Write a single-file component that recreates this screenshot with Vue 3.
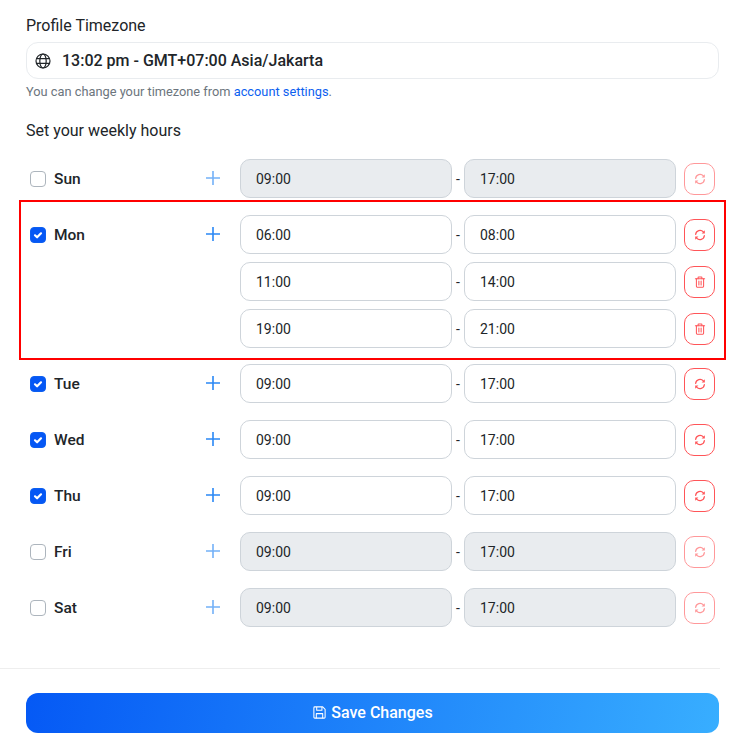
<script setup>
const days = [
  { name: "Sun", on: false, slots: [["09:00", "17:00"]] },
  { name: "Mon", on: true, marked: true, slots: [["06:00", "08:00"], ["11:00", "14:00"], ["19:00", "21:00"]] },
  { name: "Tue", on: true, slots: [["09:00", "17:00"]] },
  { name: "Wed", on: true, slots: [["09:00", "17:00"]] },
  { name: "Thu", on: true, slots: [["09:00", "17:00"]] },
  { name: "Fri", on: false, slots: [["09:00", "17:00"]] },
  { name: "Sat", on: false, slots: [["09:00", "17:00"]] },
];
</script>

<template>
  <div class="page">
    <section class="top">
      <div class="title">Profile Timezone</div>
      <div class="timezone">
        <svg class="globe" viewBox="0 0 16 16" fill="none" stroke="currentColor" stroke-width="1.2">
          <circle cx="8" cy="8" r="7" />
          <ellipse cx="8" cy="8" rx="3.2" ry="7" />
          <path d="M1.4 5.7h13.2M1.4 10.3h13.2" />
        </svg>
        <span>13:02 pm - GMT+07:00 Asia/Jakarta</span>
      </div>
      <p class="hint">You can change your timezone from <a class="link">account settings</a>.</p>
      <div class="title weekly">Set your weekly hours</div>

      <div class="days">
        <div v-for="day in days" :key="day.name" class="day" :class="{ 'day--marked': day.marked, 'day--off': !day.on }">
          <div class="day-name">
            <span class="check" :class="{ 'check--on': day.on }">
              <svg v-if="day.on" viewBox="0 0 14 14" fill="none" stroke="#fff" stroke-width="2.2" stroke-linecap="round" stroke-linejoin="round">
                <path d="M4 7.3l2.1 2 3.9-4" />
              </svg>
            </span>
            <span>{{ day.name }}</span>
          </div>
          <button class="add">
            <svg viewBox="0 0 14 14" fill="none" stroke="currentColor" stroke-width="1.6">
              <path d="M7 0v14M0 7h14" />
            </svg>
          </button>
          <div class="slots">
            <div v-for="(slot, i) in day.slots" :key="i" class="slot">
              <input class="time" :value="slot[0]" :disabled="!day.on" readonly />
              <span class="dash">-</span>
              <input class="time" :value="slot[1]" :disabled="!day.on" readonly />
              <button class="action">
                <svg v-if="i === 0" viewBox="0 0 14 14" fill="none" stroke="currentColor" stroke-width="1.4" stroke-linecap="round">
                  <path d="M1.9 6.3A5.2 5.2 0 0 1 10.9 3.4" />
                  <path d="M12.1 7.7A5.2 5.2 0 0 1 3.1 10.6" />
                  <path d="M12.6 1.6v3.7H8.9z" fill="currentColor" stroke="none" />
                  <path d="M1.4 12.4V8.7h3.7z" fill="currentColor" stroke="none" />
                </svg>
                <svg v-else viewBox="0 0 14 14" fill="none" stroke="currentColor" stroke-width="1.2" stroke-linecap="round" stroke-linejoin="round">
                  <path d="M1.6 3.2h10.8" />
                  <path d="M4.8 3.2V1.6c0-.3.2-.5.5-.5h3.4c.3 0 .5.2.5.5v1.6" />
                  <path d="M2.8 3.2v8.9c0 .5.4.9.9.9h6.6c.5 0 .9-.4.9-.9V3.2" />
                  <path d="M5.7 5.8v4.6M8.3 5.8v4.6" />
                </svg>
              </button>
            </div>
          </div>
          <div v-if="day.marked" class="marker"></div>
        </div>
      </div>
    </section>

    <hr class="divider" />

    <div class="footer">
      <button class="save">
        <svg viewBox="0 0 16 16" fill="none" stroke="currentColor" stroke-width="1.1" stroke-linejoin="round">
          <path d="M2 3c0-.6.4-1 1-1h8.4L14 4.6V13c0 .6-.4 1-1 1H3c-.6 0-1-.4-1-1z" />
          <path d="M5 2v3.6h5.6V2" />
          <path d="M4.6 14V9.2h6.8V14" />
        </svg>
        <span>Save Changes</span>
      </button>
    </div>
  </div>
</template>

<style>
html,
body {
  background: #fff;
}
</style>

<style scoped>
.page {
  width: 736px;
  height: 748px;
  overflow: hidden;
  font-family: Roboto, "Liberation Sans", sans-serif;
  color: #212529;
  background: #fff;
}

.top {
  width: 693px;
  margin-left: 26px;
  padding-top: 16px;
}

.title {
  font-size: 16px;
  line-height: 20px;
}

.timezone {
  display: flex;
  align-items: center;
  gap: 11px;
  box-sizing: border-box;
  height: 37px;
  margin-top: 6px;
  padding-left: 8px;
  border: 1px solid #e9ecef;
  border-radius: 12px;
  font-size: 16px;
  font-weight: 500;
}

.globe {
  width: 16px;
  height: 16px;
}

.hint {
  margin: 5px 0 0;
  font-size: 12.8px;
  line-height: 15px;
  color: #6c757d;
}

.link {
  color: #0d5ff0;
}

.weekly {
  margin-top: 22px;
}

.days {
  margin-top: 10px;
}

.day {
  position: relative;
  display: flex;
  align-items: flex-start;
  padding: 8px 0 9px;
}

.day--marked {
  padding-bottom: 8px;
}

.marker {
  position: absolute;
  inset: -7px -7px -4px -7px;
  border: 2px solid #ff0000;
  pointer-events: none;
}

.day-name {
  display: flex;
  align-items: center;
  gap: 8px;
  width: 171px;
  height: 39px;
  padding-left: 4px;
  box-sizing: border-box;
  font-size: 15.5px;
  font-weight: 500;
}

.check {
  display: block;
  box-sizing: border-box;
  width: 16px;
  height: 16px;
  border: 1px solid #adb5bd;
  border-radius: 4px;
  background: #fff;
}

.check--on {
  border-color: #0d5ff0;
  background: #0557f5;
}

.check svg {
  display: block;
  width: 14px;
  height: 14px;
}

.add {
  display: flex;
  align-items: center;
  justify-content: center;
  width: 32px;
  height: 37px;
  margin-right: 11px;
  padding: 0;
  border: 0;
  background: none;
  color: #2a88f5;
}

.add svg {
  width: 14px;
  height: 14px;
}

.day--off .add {
  opacity: 0.65;
}

.slots {
  display: flex;
  flex-direction: column;
  gap: 8px;
}

.slot {
  display: flex;
  align-items: center;
}

.time {
  box-sizing: border-box;
  width: 212px;
  height: 39px;
  padding: 0 15px;
  border: 1px solid #ced4da;
  border-radius: 10px;
  background: #fff;
  color: #212529;
  font-family: inherit;
  font-size: 14px;
  outline: none;
}

.time:disabled {
  background: #e9ecef;
  color: #212529;
  opacity: 1;
}

.dash {
  width: 12px;
  text-align: center;
  font-size: 14px;
}

.action {
  display: flex;
  align-items: center;
  justify-content: center;
  box-sizing: border-box;
  width: 31px;
  height: 32px;
  margin-left: 8px;
  padding: 0;
  border: 1px solid #ff5558;
  border-radius: 10px;
  background: #fff;
  color: #ff5558;
}

.action svg {
  width: 12px;
  height: 12px;
}

.day--off .action {
  opacity: 0.6;
}

.divider {
  width: 720px;
  height: 1px;
  margin: 32px 0 0;
  border: 0;
  background: #eeeeee;
}

.footer {
  padding: 24px 17px 0 26px;
}

.save {
  display: flex;
  align-items: center;
  justify-content: center;
  gap: 4px;
  box-sizing: border-box;
  width: 693px;
  height: 40px;
  padding: 0 0 1px;
  border: 0;
  border-radius: 12px;
  background: linear-gradient(100deg, #0559f5 0%, #38aeff 100%);
  color: #fff;
  font-family: inherit;
  font-size: 16px;
  font-weight: 500;
}

.save svg {
  width: 15px;
  height: 15px;
}
</style>
